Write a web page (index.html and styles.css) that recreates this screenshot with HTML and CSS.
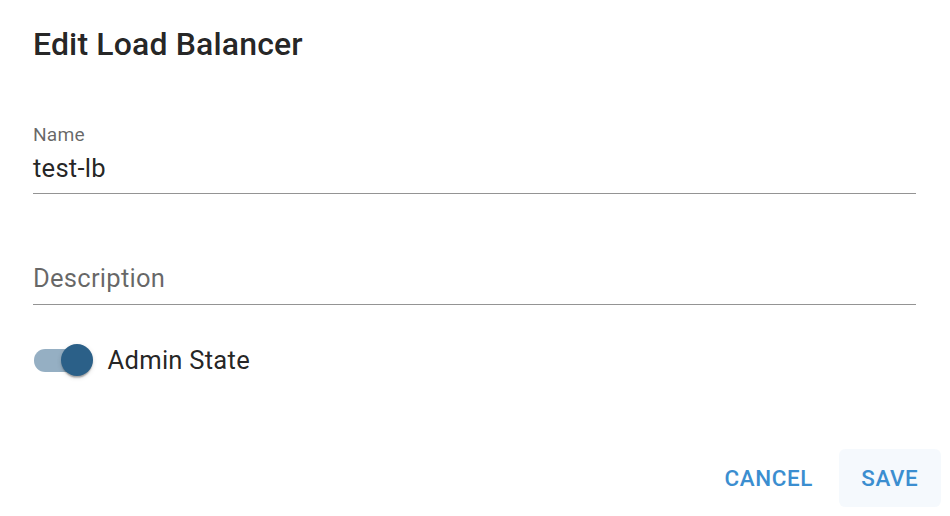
FILE: index.html
```html
<!DOCTYPE html>
<html lang="en">
  <head>
    <meta charset="UTF-8" />
    <meta name="viewport" content="width=device-width, initial-scale=1.0" />
    <title>Edit Load Balancer</title>
    <link rel="stylesheet" href="styles.css">
  </head>
  <body>
    <div class="dialog">
      <h2 class="title">Edit Load Balancer</h2>

      <div class="field">
        <label class="label" for="name">Name</label>
        <div class="input">test-lb</div>
      </div>

      <div class="field field-empty">
        <label class="label label-hidden" for="description">Description</label>
        <div class="input placeholder">Description</div>
      </div>

      <div class="switch-row">
        <span class="switch">
          <span class="track"></span>
          <span class="thumb"></span>
        </span>
        <span class="switch-label">Admin State</span>
      </div>

      <div class="actions">
        <button class="btn">Cancel</button>
        <button class="btn btn-focus">Save</button>
      </div>
    </div>
  </body>
</html>
```

FILE: styles.css
```css
:root {
  --text: rgba(0, 0, 0, 0.87);
  --muted: rgba(0, 0, 0, 0.6);
  --line: rgba(0, 0, 0, 0.42);
  --primary: #3b8ed0;
  --switch: #2b6088;
}

* {
  margin: 0;
  padding: 0;
  box-sizing: border-box;
  font-family: Roboto, "Liberation Sans", sans-serif;
}

body {
  width: 100%;
  min-height: 100vh;
  background-color: #ffffff;
  color: var(--text);
}

.dialog {
  padding: 18.5px 34px 0 33px;
  display: flex;
  flex-direction: column;
}

.title {
  font-size: 32px;
  font-weight: 500;
  line-height: 51.2px;
  letter-spacing: 0.15px;
}

.field {
  margin-top: 54.8px;
  display: flex;
  flex-direction: column;
}

.field-empty {
  margin-top: 40.8px;
}

.label {
  font-size: 19.2px;
  line-height: 19.2px;
  color: var(--muted);
  letter-spacing: 0.15px;
}

.label-hidden {
  visibility: hidden;
}

.input {
  margin-top: 6.2px;
  padding-bottom: 6.5px;
  font-size: 25.6px;
  line-height: 36.8px;
  letter-spacing: 0.24px;
  border-bottom: 1px solid var(--line);
}

.placeholder {
  color: var(--muted);
}

.switch-row {
  margin-top: 25.4px;
  height: 60.8px;
  display: flex;
  align-items: center;
}

.switch {
  position: relative;
  width: 74.6px;
  height: 60.8px;
  display: flex;
  align-items: center;
}

.track {
  margin-left: 1px;
  width: 54.4px;
  height: 22.4px;
  border-radius: 11.2px;
  background-color: var(--switch);
  opacity: 0.5;
}

.thumb {
  position: absolute;
  left: 28.2px;
  top: 14.4px;
  width: 32px;
  height: 32px;
  border-radius: 50%;
  background-color: var(--switch);
  box-shadow: 0 3.2px 1.6px -1.6px rgba(0, 0, 0, 0.2),
    0 1.6px 1.6px 0 rgba(0, 0, 0, 0.14), 0 1.6px 4.8px 0 rgba(0, 0, 0, 0.12);
}

.switch-label {
  font-size: 25.6px;
  line-height: 36px;
  letter-spacing: 0.24px;
}

.actions {
  margin-top: 58.6px;
  margin-right: -25px;
  display: flex;
  justify-content: flex-end;
  gap: 12.8px;
}

.btn {
  min-width: 102.4px;
  height: 57.6px;
  padding: 0 12.8px;
  border: none;
  border-radius: 6.4px;
  background: transparent;
  color: var(--primary);
  font-size: 22.4px;
  font-weight: 500;
  letter-spacing: 0.64px;
  text-transform: uppercase;
  cursor: pointer;
}

.btn-focus {
  background-color: rgba(59, 142, 208, 0.05);
}
```
